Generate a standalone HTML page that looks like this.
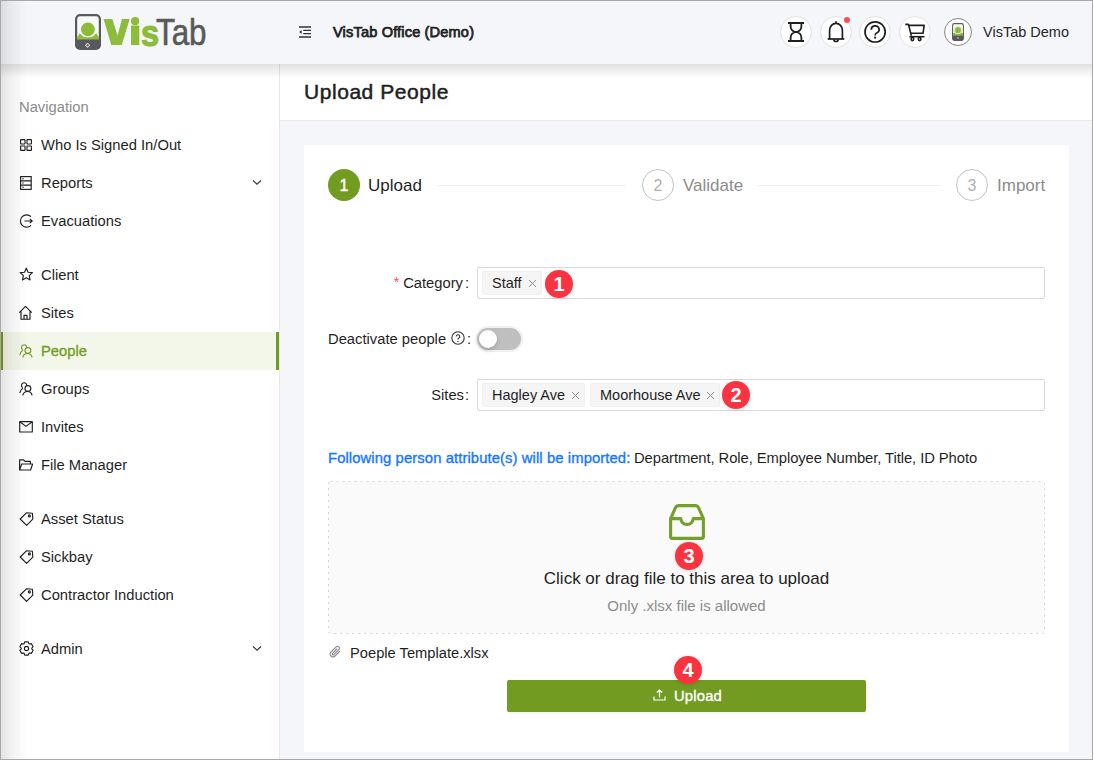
<!DOCTYPE html>
<html><head><meta charset="utf-8">
<style>
*{box-sizing:border-box;margin:0;padding:0}
html,body{width:1093px;height:760px;overflow:hidden;background:#f5f6fa}
body{font-family:"Liberation Sans",sans-serif;color:#1f1f1f;position:relative}
.frame{position:absolute;left:0;top:0;width:1093px;height:760px;overflow:hidden;background:#f5f6fa}
.bord{position:absolute;left:0;top:0;width:1093px;height:760px;border:1px solid #a8a8a8;z-index:50;pointer-events:none}
.abs{position:absolute}
.header{position:absolute;left:0;top:0;width:1093px;height:64px;background:#f5f6fa;z-index:5}
.hshadow{position:absolute;left:0;top:64px;width:1093px;height:14px;background:linear-gradient(rgba(0,0,0,.12),rgba(0,0,0,0));z-index:4}
.lshadow{position:absolute;left:0;top:0;width:28px;height:760px;background:linear-gradient(90deg,rgba(0,0,0,.115),rgba(0,0,0,.06) 35%,rgba(0,0,0,0));z-index:6;pointer-events:none}
.sidebar{position:absolute;left:0;top:64px;width:280px;height:696px;background:#fff;border-right:1px solid #f0e4e8}
.nav{position:absolute;left:19px;top:99px;font-size:14.75px;line-height:16px;color:#8c8c8c}
.item{position:absolute;left:0;width:279px;height:0;font-size:14.75px;color:#1f1f1f;z-index:3}
.item .t{position:absolute;left:41px;top:-8px;line-height:16px;white-space:nowrap}
.item svg{position:absolute}
.item.active{color:#729b21}
.item.active .t{-webkit-text-stroke:.3px #729b21}
.item.active:before{content:"";position:absolute;left:0;top:-19px;width:276px;height:38px;background:#f3f7ea}
.item.active .lb{position:absolute;left:1px;top:-19px;width:2px;height:38px;background:#729b21}
.item.active:after{content:"";position:absolute;left:276px;top:-19px;width:3px;height:38px;background:#729b21}

.pghead{position:absolute;left:280px;top:64px;width:813px;height:57px;background:#fff;border-bottom:1px solid #f0e4e8;z-index:2}
.pgtitle{position:absolute;left:304px;top:80px;font-size:21px;letter-spacing:.55px;line-height:24px;font-weight:normal;-webkit-text-stroke:.5px #1f1f1f;color:#1f1f1f;z-index:3}
.card{position:absolute;left:304px;top:145px;width:765px;height:607px;background:#fff;border-radius:2px}
.step{position:absolute;width:32px;height:32px;border-radius:50%;top:169px;font-size:16px;line-height:30px;text-align:center}
.step.on{background:#729b21;color:#fff;line-height:33px;-webkit-text-stroke:.45px #fff}
.step.off{border:1px solid #c4c4c4;color:#b0b0b0;line-height:31px}
.stxt{position:absolute;top:177px;font-size:17px;line-height:18px;white-space:nowrap}
.sline{position:absolute;top:185px;height:1px;background:#ececec}
.lbl{position:absolute;font-size:14.75px;line-height:16px;white-space:nowrap;color:#1f1f1f;text-align:right}
.inp{position:absolute;left:477px;width:568px;height:32px;border:1px solid #d9d9d9;border-radius:2px;background:#fff}
.tag{position:absolute;top:3px;height:24px;background:#f5f5f5;border:1px solid #f0f0f0;border-radius:2px;font-size:14.5px;line-height:22px;color:#1f1f1f;padding-left:9px;white-space:nowrap}
.tag .x{position:absolute;top:0;color:#8c8c8c;font-size:12px}
.badge{position:absolute;width:28px;height:28px;border-radius:50%;background:#fa3340;color:#fff;font-weight:bold;font-size:20px;line-height:29px;text-align:center;box-shadow:0 1px 4px rgba(0,0,0,.12);z-index:10}
.drag{position:absolute;left:328px;top:481px;width:717px;height:153px;background:#fafafa;border-radius:2px}
.btn{position:absolute;left:507px;top:680px;width:359px;height:32px;background:#729b21;border-radius:2px;box-shadow:0 2px 0 rgba(0,0,0,.04);color:#fff;font-size:14px}

.hic{position:absolute;top:16px;width:32px;height:32px;border-radius:50%;background:#fff;border:1px solid #e3e3e3}
.hic svg{position:absolute}
</style></head><body>
<div class="frame">
 <div class="header">
  <!-- logo -->
  <svg class="abs" style="left:75px;top:14px" width="26" height="36" viewBox="0 0 26 36">
   <rect x="1.1" y="1.1" width="23.8" height="33.8" rx="4" fill="#f8f9fb"/>
   <path d="M2.2 26V23.5L4.6 19.3L9 23H17L21.4 19.3L23.8 23.5V26Z" fill="#8dbb3a"/>
   <circle cx="12.9" cy="15.3" r="7.5" fill="#8dbb3a" stroke="#f8f9fb" stroke-width="1.2"/>
   <path d="M1.1 25.6H24.9V31Q24.9 34.9 21 34.9H5Q1.1 34.9 1.1 31Z" fill="#58595b"/>
   <rect x="1.1" y="1.1" width="23.8" height="33.8" rx="4" fill="none" stroke="#58595b" stroke-width="2.2"/>
   <g fill="none" stroke="#fff" stroke-width=".8"><circle cx="12.6" cy="31.3" r="1.6"/><path d="M12.6 29V29.9M12.6 32.7V33.6M10.3 31.3H11.2M14 31.3H14.9"/></g>
  </svg>
  <svg class="abs" style="left:100px;top:14px" width="40" height="34" viewBox="0 0 40 34"><path d="M3.6 5H12.4L17.5 21.5L22 5H29.7L21.7 31H11.3Z" fill="#8dbb3a"/><circle cx="35.1" cy="7.2" r="4.1" fill="#8dbb3a"/><rect x="31" y="11.5" width="8.3" height="19.5" fill="#8dbb3a"/></svg>
  <div class="abs" style="left:140.5px;top:13.5px;font-size:36px;line-height:40px;font-weight:bold;color:#8dbb3a;-webkit-text-stroke:1.2px #8dbb3a;transform-origin:0 0;transform:scaleX(.9)">s</div>
  <div class="abs" style="left:156px;top:12.5px;font-size:36px;line-height:40px;color:#58595b;-webkit-text-stroke:.6px #58595b;transform-origin:0 0;transform:scaleX(.87)">Tab</div>
  <!-- menu fold icon -->
  <svg class="abs" style="left:298px;top:25px" width="14" height="14" viewBox="0 0 14 14"><g stroke="#333" stroke-width="1.3"><path d="M1 2H13M5.3 5.4H13M5.3 8.6H13M1 12H13"/></g><path d="M1.2 7L3.6 5V9Z" fill="#333"/></svg>
  <div class="abs" style="left:332px;top:23px;font-size:14.6px;line-height:18px;letter-spacing:.15px;left:333px;-webkit-text-stroke:.75px #222;color:#222">VisTab Office (Demo)</div>

  <div class="hic" style="left:780px"></div>
  <svg class="abs" style="left:786px;top:20px;z-index:6" width="20" height="24" viewBox="0 0 20 24"><g fill="none" stroke="#1f1f1f" stroke-width="1.8"><path d="M2 3H18M2 21H18"/><path d="M4.6 3V6.2A5.4 5.8 0 0 0 15.4 6.2V3M4.6 21V17.8A5.4 5.8 0 0 1 15.4 17.8V21"/></g></svg>
  <div class="hic" style="left:819.8px"></div>
  <svg class="abs" style="left:826px;top:20px;z-index:6" width="20" height="24" viewBox="0 0 20 24"><g fill="none" stroke="#1f1f1f" stroke-width="1.7"><path d="M10 1.2V3.4"/><path d="M3.6 19V10.2A6.4 6.8 0 0 1 16.4 10.2V19"/><path d="M1.7 19H18.3"/><path d="M7.9 19.4A2.1 2.1 0 0 0 12.1 19.4"/></g></svg>
  <div class="abs" style="left:844px;top:17px;width:6px;height:6px;border-radius:50%;background:#ff4d4f;z-index:7"></div>
  <div class="hic" style="left:859.2px"></div>
  <svg class="abs" style="left:863px;top:20px;z-index:6" width="24" height="24" viewBox="0 0 24 24"><g fill="none" stroke="#1f1f1f" stroke-width="1.7"><circle cx="12.1" cy="11.9" r="10.1"/><path d="M8.3 9.7A3.9 3.7 0 1 1 14 12.8C12.8 13.4 12.1 14 12.1 15.2V15.6"/></g><circle cx="12.1" cy="17.7" r="1.1" fill="#1f1f1f"/></svg>
  <div class="hic" style="left:899.2px"></div>
  <svg class="abs" style="left:903px;top:22px;z-index:6" width="24" height="20" viewBox="0 0 24 20"><g fill="none" stroke="#1f1f1f" stroke-width="1.6" stroke-linejoin="round"><path d="M2.3 2.4H5.4L8.4 13.8"/><path d="M6 3.4H21.2L20 11.3H7.9"/><path d="M6.4 14.7H21.5"/><ellipse cx="9.4" cy="17.1" rx="1.3" ry="1.6"/><ellipse cx="16.6" cy="17.1" rx="1.3" ry="1.6"/></g></svg>
  <div class="abs" style="left:944px;top:18px;width:28px;height:28px;border-radius:50%;background:#fff;border:1px solid #858585"></div>
  <svg class="abs" style="left:952px;top:23px" width="12" height="18" viewBox="0 0 12 18"><rect x=".6" y=".6" width="10.8" height="16.8" rx="1.8" fill="#fff"/><path d="M1.1 12.8V10.6L2.3 9.4Q6 12.4 9.7 9.4L10.9 10.6V12.8Z" fill="#8dbb3a"/><circle cx="6" cy="7.2" r="3.6" fill="#8dbb3a" stroke="#fff" stroke-width=".6"/><path d="M.6 12.6H11.4V15.6Q11.4 17.4 9.6 17.4H2.4Q.6 17.4 .6 15.6Z" fill="#58595b"/><rect x=".6" y=".6" width="10.8" height="16.8" rx="1.8" fill="none" stroke="#5a5a5a" stroke-width="1.1"/><circle cx="6" cy="15" r=".8" fill="#ddd"/></svg>
  <div class="abs" style="left:983px;top:24px;font-size:14.5px;line-height:16px;color:#262626;white-space:nowrap">VisTab Demo</div>
 </div>
 <div class="hshadow"></div>

 <div class="pghead"></div>
 <div class="pgtitle">Upload People</div>
 <div class="card"></div>
 <div class="step on" style="left:328px">1</div>
 <div class="stxt" style="left:368px;color:#1f1f1f">Upload</div>
 <div class="sline" style="left:438px;width:187px"></div>
 <div class="step off" style="left:642px">2</div>
 <div class="stxt" style="left:683px;color:#8c8c8c">Validate</div>
 <div class="sline" style="left:758px;width:182px"></div>
 <div class="step off" style="left:956px">3</div>
 <div class="stxt" style="left:997px;color:#8c8c8c">Import</div>

 <div class="lbl" style="left:300px;width:163px;top:275px"><span style="color:#ff4d4f;font-size:14px;position:relative;top:-1px;margin-right:4px">*</span>Category</div>
 <div class="lbl" style="left:465px;top:275px">:</div>
 <div class="inp" style="top:267px">
  <div class="tag" style="left:4px;width:60px">Staff<svg class="x" style="left:45px;top:7px" width="9" height="9" viewBox="0 0 9 9"><path d="M1 1L8 8M8 1L1 8" stroke="#8a8a8a" stroke-width="1"/></svg></div>
 </div>
 <div class="badge" style="left:545px;top:270px">1</div>

 <div class="lbl" style="left:328px;top:331px">Deactivate people</div>
 <svg class="abs" style="left:451px;top:331px" width="14" height="14" viewBox="0 0 14 14"><circle cx="7" cy="7" r="6.2" fill="none" stroke="#333" stroke-width="1.1"/><path d="M5.2 5.5A1.8 1.8 0 1 1 7.6 7.2C7.2 7.4 7 7.7 7 8.2V8.6" fill="none" stroke="#333" stroke-width="1.1"/><circle cx="7" cy="10.4" r=".7" fill="#333"/></svg>
 <div class="lbl" style="left:467px;top:331px">:</div>
 <div class="abs" style="left:477px;top:328px;width:44px;height:22px;border-radius:11px;background:#bfbfbf;box-shadow:0 0 0 2px rgba(0,0,0,.06)"><div class="abs" style="left:2px;top:2px;width:18px;height:18px;border-radius:50%;background:#fff;box-shadow:0 2px 4px rgba(0,35,11,.2)"></div></div>

 <div class="lbl" style="left:300px;width:164px;top:387px">Sites</div>
 <div class="lbl" style="left:465px;top:387px">:</div>
 <div class="inp" style="top:379px">
  <div class="tag" style="left:4px;width:103px">Hagley Ave<svg class="x" style="left:88px;top:7px" width="9" height="9" viewBox="0 0 9 9"><path d="M1 1L8 8M8 1L1 8" stroke="#8a8a8a" stroke-width="1"/></svg></div>
  <div class="tag" style="left:112px;width:130px">Moorhouse Ave<svg class="x" style="left:115px;top:7px" width="9" height="9" viewBox="0 0 9 9"><path d="M1 1L8 8M8 1L1 8" stroke="#8a8a8a" stroke-width="1"/></svg></div>
 </div>
 <div class="badge" style="left:722px;top:381px">2</div>

 <div class="abs" style="left:328px;top:450px;font-size:14.8px;line-height:16px;white-space:nowrap;color:#1677ff;-webkit-text-stroke:.35px #1677ff;letter-spacing:.1px">Following person attribute(s) will be imported:</div>
 <div class="abs" style="left:634px;top:450px;font-size:14.8px;letter-spacing:-.08px;line-height:16px;white-space:nowrap;color:#1f1f1f">Department, Role, Employee Number, Title, ID Photo</div>

 <div class="drag"></div>
 <svg class="abs" style="left:328px;top:481px" width="717" height="153"><rect x=".5" y=".5" width="716" height="152" rx="2" fill="none" stroke="#d6d6d6" stroke-width="1" stroke-dasharray="2 4"/></svg>
 <svg class="abs" style="left:669px;top:504px" width="36" height="36" viewBox="0 0 36 36"><path d="M1.6 14.6L6.6 3.4Q7.4 1.6 9.4 1.6H26.6Q28.6 1.6 29.4 3.4L34.4 14.6V32.4Q34.4 34.4 32.4 34.4H3.6Q1.6 34.4 1.6 32.4Z M1.6 14.6H11.8Q12.6 20.4 18 20.4Q23.4 20.4 24.2 14.6H34.4" fill="none" stroke="#72a02a" stroke-width="3.1" stroke-linejoin="round"/></svg>
 <div class="badge" style="left:675px;top:542px">3</div>
 <div class="abs" style="left:328px;width:717px;top:570px;text-align:center;font-size:17px;line-height:18px;color:#1f1f1f">Click or drag file to this area to upload</div>
 <div class="abs" style="left:328px;width:717px;top:598px;text-align:center;font-size:15px;line-height:16px;color:#8c8c8c">Only .xlsx file is allowed</div>

 <svg class="abs" style="left:329px;top:645px" width="13" height="14" viewBox="0 0 13 14"><path d="M10.5 6.5L6 11A2.8 2.8 0 0 1 2 7L7.2 1.8A1.9 1.9 0 0 1 9.9 4.5L4.8 9.6A.9.9 0 0 1 3.5 8.3L7.8 4" fill="none" stroke="#8c8c8c" stroke-width="1.1" stroke-linecap="round"/></svg>
 <div class="abs" style="left:350px;top:645px;font-size:14.7px;line-height:16px;color:#1f1f1f">Poeple Template.xlsx</div>

 <div class="btn">
  <svg class="abs" style="left:146px;top:9px" width="13" height="12" viewBox="0 0 13 12"><path d="M6.5 8.5V1M3.8 3.5L6.5 1L9.2 3.5M1 7.5V11H12V7.5" fill="none" stroke="#fff" stroke-width="1.2"/></svg>
  <div class="abs" style="left:167px;top:8px;line-height:16px;font-size:14.75px;letter-spacing:.2px;-webkit-text-stroke:.35px #fff">Upload</div>
 </div>
 <div class="badge" style="left:674px;top:656px">4</div>
 <div class="sidebar">
  
 </div>
 <div class="nav">Navigation</div>
 <div class="sb-items">
  <div class="item" style="top:145px"><span class="ic"><svg width="14" height="14" viewBox="0 0 14 14" style="left:19px;top:-7px"><g fill="none" stroke="currentColor" stroke-width="1.15"><rect x="1.6" y="1.6" width="4.4" height="4.4" rx=".4"/><rect x="8" y="1.6" width="4.4" height="4.4" rx=".4"/><rect x="1.6" y="8" width="4.4" height="4.4" rx=".4"/><rect x="8" y="8" width="4.4" height="4.4" rx=".4"/></g></svg></span><span class="t">Who Is Signed In/Out</span></div>
  <div class="item" style="top:183px"><span class="ic"><svg width="14" height="16" viewBox="0 0 14 16" style="left:19px;top:-8px"><g fill="none" stroke="currentColor" stroke-width="1.15"><rect x="1.6" y="1.6" width="10.6" height="12.8"/><path d="M1.6 5.9H12.2M1.6 10.1H12.2"/></g><g fill="currentColor"><circle cx="4" cy="3.8" r=".7"/><circle cx="4" cy="8" r=".7"/><circle cx="4" cy="12.2" r=".7"/></g></svg></span><span class="t">Reports</span><svg class="chev" width="10" height="7" viewBox="0 0 10 7" style="left:252px;top:-4px"><path d="M1 1.5L5 5.2L9 1.5" fill="none" stroke="#333" stroke-width="1.15"/></svg></div>
  <div class="item" style="top:221px"><span class="ic"><svg width="16" height="16" viewBox="0 0 16 16" style="left:18px;top:-8px"><g fill="none" stroke="currentColor" stroke-width="1.15"><path d="M13 3.6A6.2 6.2 0 1 0 13 12.4"/><path d="M6.5 8H14.2M11.8 5.8L14.2 8L11.8 10.2"/></g></svg></span><span class="t">Evacuations</span></div>
  <div class="item" style="top:275px"><span class="ic"><svg width="15" height="15" viewBox="0 0 15 15" style="left:19px;top:-8px"><path d="M7.3 1.2L9.1 5.2L13.4 5.6L10.2 8.6L11.1 12.9L7.3 10.7L3.5 12.9L4.4 8.6L1.2 5.6L5.5 5.2Z" fill="none" stroke="currentColor" stroke-width="1.15" stroke-linejoin="round"/></svg></span><span class="t">Client</span></div>
  <div class="item" style="top:313px"><span class="ic"><svg width="16" height="16" viewBox="0 0 16 16" style="left:18px;top:-8px"><g fill="none" stroke="currentColor" stroke-width="1.15" stroke-linejoin="round"><path d="M1.2 7.6L7.5 1.4L13.8 7.6M3 6V14.2H12V6"/><path d="M6 14.2V10.4H9V14.2"/></g></svg></span><span class="t">Sites</span></div>
  <div class="item active" style="top:351px"><span class="lb"></span><span class="ic"><svg width="15" height="15" viewBox="0 0 15 15" style="left:19px;top:-8px"><g fill="none" stroke="currentColor" stroke-width="1.15" stroke-linecap="round"><path d="M3.3 6.4A2.7 2.7 0 1 1 7.9 4.4"/><circle cx="8.9" cy="7.5" r="2.9"/><path d="M0.9 11.6Q1.8 8.6 3.6 7.6"/><path d="M3.9 14Q4.8 10.5 8.5 10.5Q12.2 10.5 13 14"/></g></svg></span><span class="t">People</span></div>
  <div class="item" style="top:389px"><span class="ic"><svg width="15" height="15" viewBox="0 0 15 15" style="left:19px;top:-8px"><g fill="none" stroke="currentColor" stroke-width="1.15" stroke-linecap="round"><path d="M3.3 6.4A2.7 2.7 0 1 1 7.9 4.4"/><circle cx="8.9" cy="7.5" r="2.9"/><path d="M0.9 11.6Q1.8 8.6 3.6 7.6"/><path d="M3.9 14Q4.8 10.5 8.5 10.5Q12.2 10.5 13 14"/></g></svg></span><span class="t">Groups</span></div>
  <div class="item" style="top:427px"><span class="ic"><svg width="16" height="14" viewBox="0 0 16 14" style="left:18px;top:-7px"><g fill="none" stroke="currentColor" stroke-width="1.15"><rect x="1.7" y="1.6" width="12.6" height="10.4" rx=".3"/><path d="M1.8 1.8L8 6.4L14.2 1.8"/></g></svg></span><span class="t">Invites</span></div>
  <div class="item" style="top:465px"><span class="ic"><svg width="16" height="14" viewBox="0 0 16 14" style="left:18px;top:-7px"><g fill="none" stroke="currentColor" stroke-width="1.15" stroke-linejoin="round"><path d="M1.6 12V1.8H5.6L7 3.4H12.4V6"/><path d="M1.6 12L3.6 6H14.6L12.6 12Z"/></g></svg></span><span class="t">File Manager</span></div>
  <div class="item" style="top:519px"><span class="ic"><svg width="15" height="15" viewBox="0 0 15 15" style="left:19px;top:-8px"><g fill="none" stroke="currentColor" stroke-width="1.15" stroke-linejoin="round"><path d="M1.2 8L7.4 1.8L13.4 2.2L13.8 8.2L7.6 14.4Z"/><circle cx="10.4" cy="4.9" r="1"/></g></svg></span><span class="t">Asset Status</span></div>
  <div class="item" style="top:557px"><span class="ic"><svg width="15" height="15" viewBox="0 0 15 15" style="left:19px;top:-8px"><g fill="none" stroke="currentColor" stroke-width="1.15" stroke-linejoin="round"><path d="M1.2 8L7.4 1.8L13.4 2.2L13.8 8.2L7.6 14.4Z"/><circle cx="10.4" cy="4.9" r="1"/></g></svg></span><span class="t">Sickbay</span></div>
  <div class="item" style="top:595px"><span class="ic"><svg width="15" height="15" viewBox="0 0 15 15" style="left:19px;top:-8px"><g fill="none" stroke="currentColor" stroke-width="1.15" stroke-linejoin="round"><path d="M1.2 8L7.4 1.8L13.4 2.2L13.8 8.2L7.6 14.4Z"/><circle cx="10.4" cy="4.9" r="1"/></g></svg></span><span class="t">Contractor Induction</span></div>
  <div class="item" style="top:649px"><span class="ic"><svg width="15" height="15" viewBox="0 0 15 15" style="left:18.5px;top:-8.5px"><g fill="none" stroke="currentColor" stroke-width="1.1" stroke-linejoin="round"><path d="M5.09 2.78 L5.71 0.84 L9.29 0.84 L9.91 2.78 L10.39 3.06 L12.38 2.62 L14.16 5.71 L12.79 7.22 L12.79 7.78 L14.16 9.29 L12.38 12.38 L10.39 11.94 L9.91 12.22 L9.29 14.16 L5.71 14.16 L5.09 12.22 L4.61 11.94 L2.62 12.38 L0.84 9.29 L2.21 7.78 L2.21 7.22 L0.84 5.71 L2.62 2.62 L4.61 3.06Z"/><circle cx="7.5" cy="7.5" r="2.1"/></g></svg></span><span class="t">Admin</span><svg class="chev" width="10" height="7" viewBox="0 0 10 7" style="left:252px;top:-4px"><path d="M1 1.5L5 5.2L9 1.5" fill="none" stroke="#333" stroke-width="1.15"/></svg></div>
 </div>
 <div class="lshadow"></div>
</div>
<div class="bord"></div>
</body></html>
